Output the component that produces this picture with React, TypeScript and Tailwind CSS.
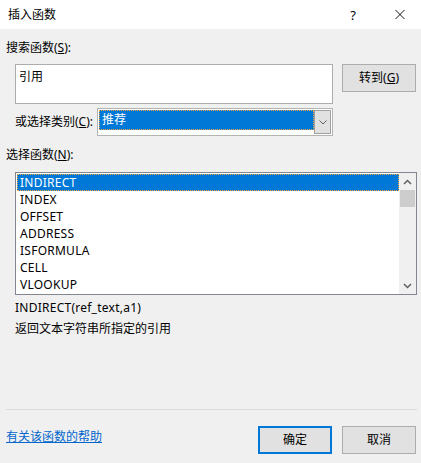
import React from "react";

const items = ["INDIRECT", "INDEX", "OFFSET", "ADDRESS", "ISFORMULA", "CELL", "VLOOKUP"];

export default function App() {
  return (
    <div
      className="w-[421px] h-[463px] bg-[#f0f0f0] flex flex-col text-[12px] leading-[16px] text-black overflow-hidden"
      style={{ fontFamily: '"Noto Sans", "Noto Sans CJK SC", sans-serif' }}
    >
      {/* Title bar */}
      <div className="h-[29px] bg-white flex items-center shrink-0">
        <div className="pl-[8px] flex-1">插入函数</div>
        <div className="w-[20px] text-center mr-[32px] text-[13px]">?</div>
        <div className="w-[10px] h-[10px] mr-[16px] flex items-center">
          <svg width="11" height="11" viewBox="0 0 11 11">
            <path d="M0.5 0.5 L10.5 10.5 M10.5 0.5 L0.5 10.5" stroke="#000" strokeWidth="1" fill="none" />
          </svg>
        </div>
      </div>

      <div className="flex-1 flex flex-col pl-[6px] pr-[4px]">
        <div className="mt-[11px] h-[16px]">
          搜索函数(<span className="underline">S</span>):
        </div>

        <div className="mt-[8px] ml-[9px] flex items-start">
          <div className="w-[318px] h-[40px] bg-white border border-[#adadad] pl-[3px] pt-[4px]">引用</div>
          <div className="ml-[9px] w-[74px] h-[28px] bg-[#e1e1e1] border border-[#adadad] flex items-center justify-center">
            转到(<span className="underline">G</span>)
          </div>
        </div>

        <div className="mt-[4px] ml-[9px] flex items-center">
          <div className="w-[82px]">
            或选择类别(<span className="underline">C</span>):
          </div>
          <div className="w-[236px] h-[28px] bg-white border border-[#b4b4b4] flex p-[1px]">
            <div className="flex-1 flex flex-col">
              <div className="h-[20px] bg-[#0078d7] border border-dotted border-[#f4a83c] text-white pl-[2px] flex items-center">
                推荐
              </div>
            </div>
            <div className="w-[17px] h-full bg-[#e1e1e1] border border-[#a0a0a0] flex items-center justify-center">
              <svg width="8" height="5" viewBox="0 0 8 5">
                <path d="M0.5 0.5 L4 4 L7.5 0.5" stroke="#606060" strokeWidth="1" fill="none" />
              </svg>
            </div>
          </div>
        </div>

        <div className="mt-[11px] h-[16px]">
          选择函数(<span className="underline">N</span>):
        </div>

        <div className="mt-[9px] ml-[9px] w-[402px] h-[123px] bg-white border border-[#828790] flex">
          <div className="flex-1 pt-[1px] pl-[1px] tracking-[0.25px]">
            {items.map((it, i) => (
              <div
                key={it}
                className={
                  i === 0
                    ? "h-[17px] bg-[#0078d7] text-white border border-dotted border-[#f4a83c] pl-[2px] flex items-center"
                    : "h-[17px] pl-[3px] flex items-center text-black"
                }
              >
                {it}
              </div>
            ))}
          </div>
          <div className="w-[17px] bg-[#f0f0f0] flex flex-col">
            <div className="h-[17px] flex items-center justify-center">
              <svg width="9" height="6" viewBox="0 0 9 6">
                <path d="M1 5 L4.5 1.5 L8 5" stroke="#606060" strokeWidth="1.5" fill="none" />
              </svg>
            </div>
            <div className="h-[17px] mx-[1px] bg-[#cdcdcd]" />
            <div className="flex-1" />
            <div className="h-[17px] flex items-center justify-center">
              <svg width="9" height="6" viewBox="0 0 9 6">
                <path d="M1 1 L4.5 4.5 L8 1" stroke="#606060" strokeWidth="1.5" fill="none" />
              </svg>
            </div>
          </div>
        </div>

        <div className="mt-[5px] ml-[9px] h-[16px] tracking-[0.25px]">INDIRECT(ref_text,a1)</div>
        <div className="mt-[5px] ml-[9px] h-[16px]">返回文本字符串所指定的引用</div>

        <div className="mt-auto h-[1px] w-[411px] bg-[#dcdcdc]" />
        <div className="mt-[16px] mb-[9px] flex items-start">
          <div className="mt-[3px] text-[#0066cc] underline flex-1">有关该函数的帮助</div>
          <div className="w-[74px] h-[28px] bg-[#e1e1e1] border-2 border-[#0078d7] flex items-center justify-center">
            确定
          </div>
          <div className="ml-[10px] mr-[1px] w-[74px] h-[28px] bg-[#e1e1e1] border border-[#adadad] flex items-center justify-center">
            取消
          </div>
        </div>
      </div>
    </div>
  );
}
